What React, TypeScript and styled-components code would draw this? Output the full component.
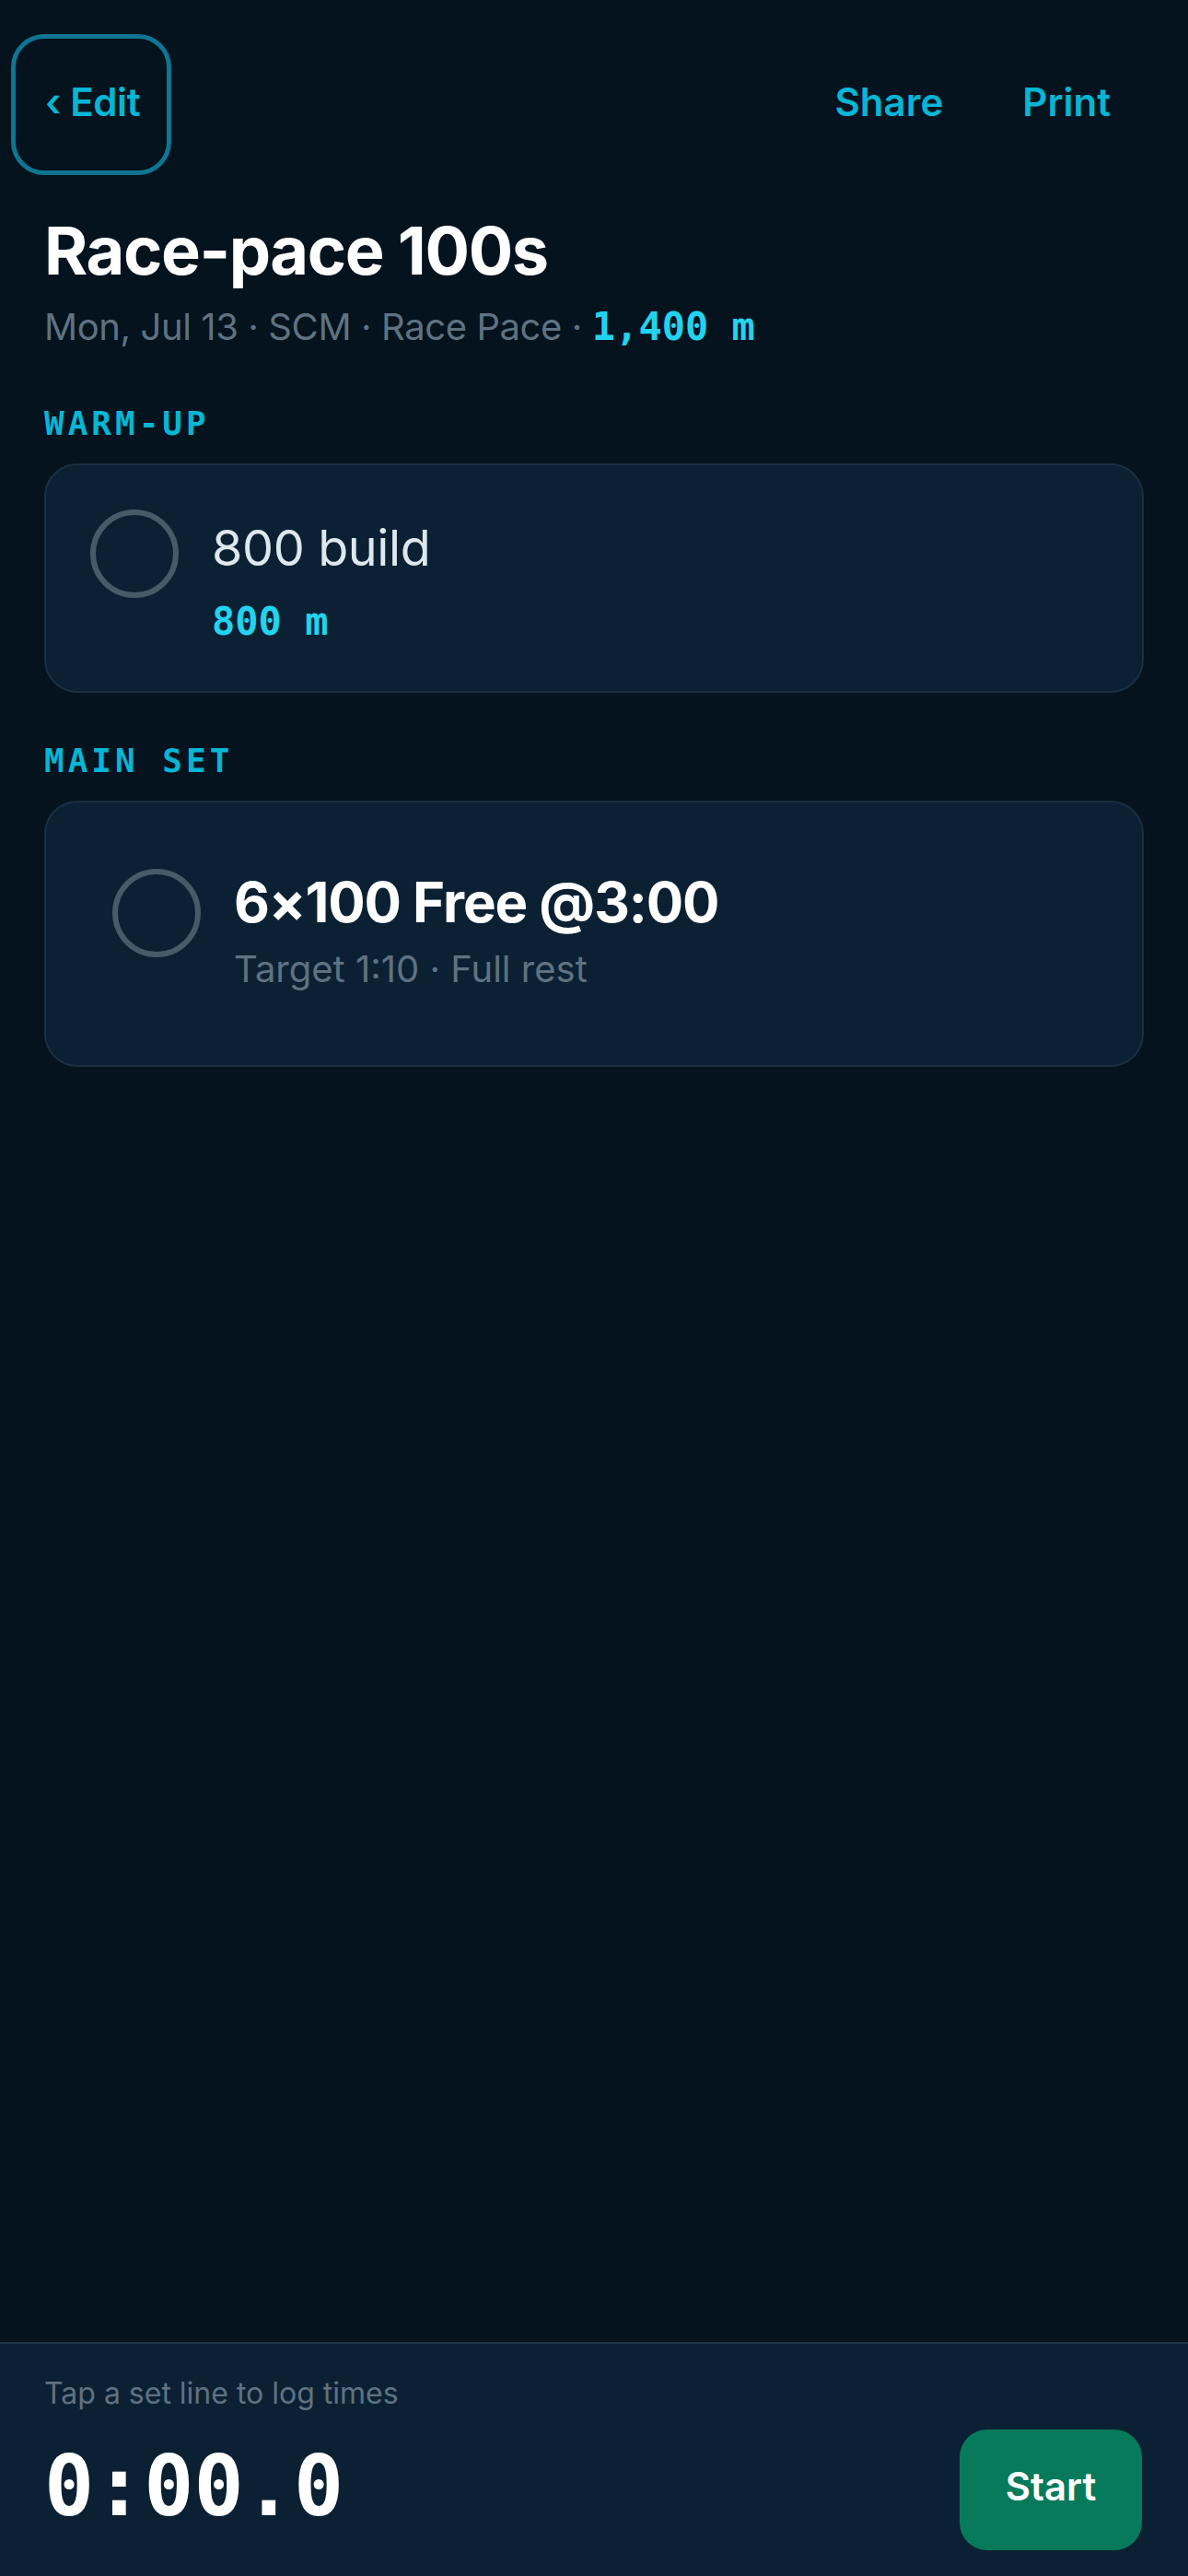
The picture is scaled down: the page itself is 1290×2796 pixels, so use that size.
import React from 'react'
import styled, { createGlobalStyle } from 'styled-components'

const GlobalStyle = createGlobalStyle`
  html, body {
    margin: 0;
    padding: 0;
    background: #04131d;
  }
  body {
    font-family: 'Inter', 'Noto Sans', sans-serif;
    -webkit-font-smoothing: antialiased;
  }
  * {
    box-sizing: border-box;
  }
`

const MONO = `'DejaVu Sans Mono', 'Liberation Mono', monospace`

const Screen = styled.div`
  min-height: 2796px;
  display: flex;
  flex-direction: column;
  background: #04131d;
`

const Header = styled.header`
  display: flex;
  justify-content: space-between;
  align-items: center;
  padding: 37px 46px 0 12px;
`

const EditButton = styled.button`
  height: 153px;
  padding: 0 29px 6px 32px;
  border: 5px solid #0f7592;
  border-radius: 36px;
  background: transparent;
  color: #06b6d4;
  font-family: 'Inter', sans-serif;
  font-size: 42px;
  font-weight: 600;
  letter-spacing: -0.4px;
`

const Actions = styled.div`
  display: flex;
  gap: 10px;
`

const ActionButton = styled.button`
  height: 153px;
  padding: 0 38px 6px;
  border: none;
  background: transparent;
  color: #06b6d4;
  font-family: 'Inter', sans-serif;
  font-size: 42px;
  font-weight: 600;
`

const Content = styled.main`
  flex: 1;
  padding: 0 48px;
`

const Title = styled.h1`
  margin: 39px 0 0;
  color: #ffffff;
  font-size: 72px;
  line-height: 86px;
  font-weight: 700;
  letter-spacing: -1.4px;
`

const Meta = styled.div`
  margin-top: 13px;
  color: #5f7282;
  font-size: 40px;
  line-height: 54px;
  letter-spacing: -0.4px;
`

const Distance = styled.span`
  font-family: ${MONO};
  font-size: 42px;
  font-weight: 700;
  letter-spacing: 0;
  color: #22d3ee;
`

const Section = styled.section<{ $gap: number }>`
  margin-top: ${p => p.$gap}px;
`

const SectionLabel = styled.div`
  font-family: ${MONO};
  font-size: 36px;
  line-height: 44px;
  font-weight: 700;
  letter-spacing: 4px;
  color: #06b6d4;
`

const Card = styled.div`
  margin-top: 21px;
  padding: 48px;
  background: #0b2133;
  border: 2px solid #1a2f42;
  border-radius: 36px;
`

const SetLine = styled.div<{ $inset: number }>`
  display: flex;
  align-items: flex-start;
  gap: 36px;
  padding: ${p => p.$inset}px;
`

const Check = styled.div`
  flex: none;
  width: 96px;
  height: 96px;
  border-radius: 50%;
  border: 6px solid #475a68;
`

const LineText = styled.div<{ $offset: number }>`
  display: flex;
  flex-direction: column;
  padding-top: ${p => p.$offset}px;
`

const PlainTitle = styled.div`
  color: #dde7ee;
  font-size: 54px;
  line-height: 67px;
  font-weight: 400;
  letter-spacing: -0.4px;
`

const StrongTitle = styled.div`
  color: #ffffff;
  font-size: 60px;
  line-height: 72px;
  font-weight: 700;
  letter-spacing: -1.1px;
`

const LineDistance = styled.div`
  margin-top: 20px;
  font-family: ${MONO};
  font-size: 42px;
  line-height: 54px;
  font-weight: 700;
  color: #22d3ee;
`

const LineNote = styled.div`
  margin-top: 10px;
  margin-bottom: 5px;
  color: #5f7282;
  font-size: 40px;
  line-height: 54px;
`

const Footer = styled.footer`
  display: flex;
  justify-content: space-between;
  align-items: flex-end;
  padding: 32px 50px 30px 48px;
  background: #0b2133;
  border-top: 2px solid #1d3748;
`

const TimerBlock = styled.div`
  display: flex;
  flex-direction: column;
`

const Hint = styled.div`
  color: #5f7282;
  font-size: 32px;
  line-height: 43px;
`

const Timer = styled.div`
  margin-top: 30px;
  margin-bottom: 18px;
  font-family: ${MONO};
  font-size: 90px;
  line-height: 99px;
  font-weight: 700;
  color: #ffffff;
`

const StartButton = styled.button`
  width: 198px;
  height: 131px;
  margin-bottom: -2px;
  padding-bottom: 10px;
  border: none;
  border-radius: 30px;
  background: #067a5a;
  color: #ffffff;
  font-family: 'Inter', sans-serif;
  font-size: 42px;
  font-weight: 600;
`

export default function App() {
  return (
    <Screen>
      <GlobalStyle />
      <Header>
        <EditButton>‹ Edit</EditButton>
        <Actions>
          <ActionButton>Share</ActionButton>
          <ActionButton>Print</ActionButton>
        </Actions>
      </Header>

      <Content>
        <Title>Race-pace 100s</Title>
        <Meta>
          Mon, Jul 13 · SCM · Race Pace · <Distance>1,400 m</Distance>
        </Meta>

        <Section $gap={56}>
          <SectionLabel>WARM-UP</SectionLabel>
          <Card>
            <SetLine $inset={0}>
              <Check />
              <LineText $offset={8}>
                <PlainTitle>800 build</PlainTitle>
                <LineDistance>800 m</LineDistance>
              </LineText>
            </SetLine>
          </Card>
        </Section>

        <Section $gap={52}>
          <SectionLabel>MAIN SET</SectionLabel>
          <Card>
            <SetLine $inset={24}>
              <Check />
              <LineText $offset={0}>
                <StrongTitle>6×100 Free @3:00</StrongTitle>
                <LineNote>Target 1:10 · Full rest</LineNote>
              </LineText>
            </SetLine>
          </Card>
        </Section>
      </Content>

      <Footer>
        <TimerBlock>
          <Hint>Tap a set line to log times</Hint>
          <Timer>0:00.0</Timer>
        </TimerBlock>
        <StartButton>Start</StartButton>
      </Footer>
    </Screen>
  )
}
